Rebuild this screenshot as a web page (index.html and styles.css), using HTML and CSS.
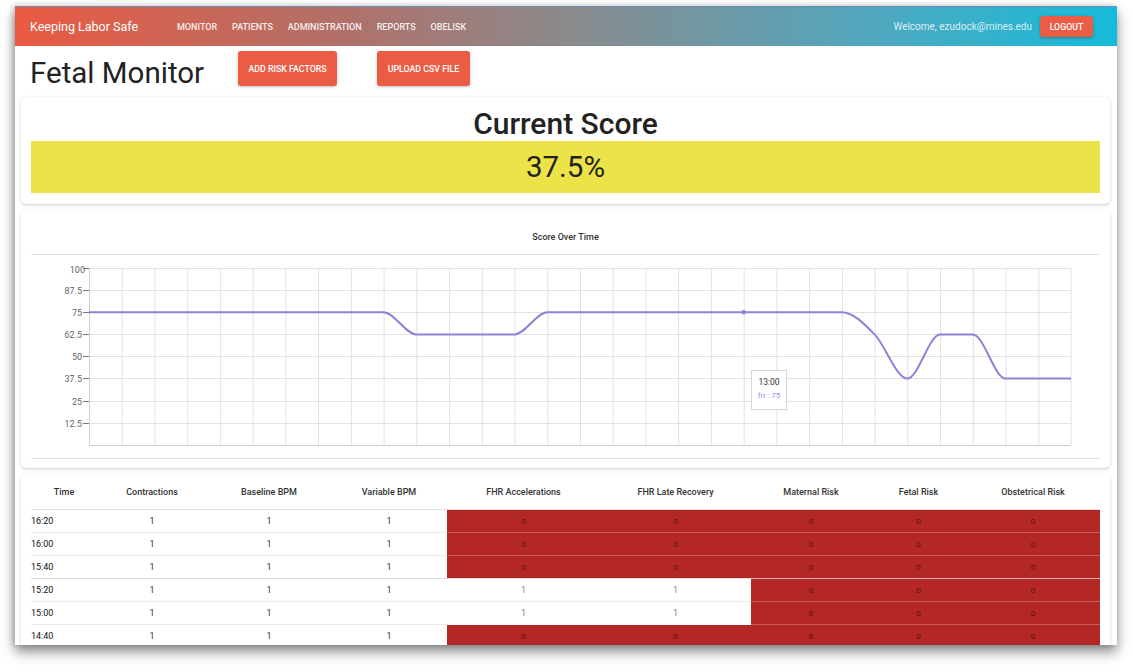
FILE: index.html
```html
<!DOCTYPE html>
<html>
<head>
<meta charset="utf-8">
<title>Fetal Monitor</title>
<link rel="stylesheet" href="styles.css">
</head>
<body>
<div class="window">
  <header class="topbar">
    <div class="brand">Keeping Labor Safe</div>
    <nav class="nav">
      <span>MONITOR</span><span>PATIENTS</span><span>ADMINISTRATION</span><span>REPORTS</span><span>OBELISK</span>
    </nav>
    <div class="user">
      <span class="welcome">Welcome, ezudock@mines.edu</span>
      <button class="btn btn-small">LOGOUT</button>
    </div>
  </header>

  <div class="title-row">
    <h1 class="page-title">Fetal Monitor</h1>
    <button class="btn btn-big btn-risk">ADD RISK FACTORS</button>
    <button class="btn btn-big btn-csv">UPLOAD CSV FILE</button>
  </div>

  <section class="card score-card">
    <h2 class="score-title">Current Score</h2>
    <div class="score-bar">37.5%</div>
  </section>

  <section class="card chart-card">
    <div class="chart-title">Score Over Time</div>
    <svg class="chart" width="1069" height="203" viewBox="31 255 1069 203" xmlns="http://www.w3.org/2000/svg">
      <g class="grid" stroke="#e2e2e2" stroke-width="1">
        <line x1="89" y1="268.5" x2="1071" y2="268.5"/>
        <line x1="89" y1="290.5" x2="1071" y2="290.5"/>
        <line x1="89" y1="312.5" x2="1071" y2="312.5"/>
        <line x1="89" y1="334.5" x2="1071" y2="334.5"/>
        <line x1="89" y1="356.5" x2="1071" y2="356.5"/>
        <line x1="89" y1="378.5" x2="1071" y2="378.5"/>
        <line x1="89" y1="401.5" x2="1071" y2="401.5"/>
        <line x1="89" y1="423.5" x2="1071" y2="423.5"/>
        <line x1="122.2" y1="268" x2="122.2" y2="445"/>
        <line x1="155" y1="268" x2="155" y2="445"/>
        <line x1="187.7" y1="268" x2="187.7" y2="445"/>
        <line x1="220.4" y1="268" x2="220.4" y2="445"/>
        <line x1="253.2" y1="268" x2="253.2" y2="445"/>
        <line x1="285.9" y1="268" x2="285.9" y2="445"/>
        <line x1="318.6" y1="268" x2="318.6" y2="445"/>
        <line x1="351.4" y1="268" x2="351.4" y2="445"/>
        <line x1="384.1" y1="268" x2="384.1" y2="445"/>
        <line x1="416.8" y1="268" x2="416.8" y2="445"/>
        <line x1="449.6" y1="268" x2="449.6" y2="445"/>
        <line x1="482.3" y1="268" x2="482.3" y2="445"/>
        <line x1="515" y1="268" x2="515" y2="445"/>
        <line x1="547.8" y1="268" x2="547.8" y2="445"/>
        <line x1="580.5" y1="268" x2="580.5" y2="445"/>
        <line x1="613.2" y1="268" x2="613.2" y2="445"/>
        <line x1="646" y1="268" x2="646" y2="445"/>
        <line x1="678.7" y1="268" x2="678.7" y2="445"/>
        <line x1="711.4" y1="268" x2="711.4" y2="445"/>
        <line x1="744.2" y1="268" x2="744.2" y2="445"/>
        <line x1="776.9" y1="268" x2="776.9" y2="445"/>
        <line x1="809.6" y1="268" x2="809.6" y2="445"/>
        <line x1="842.4" y1="268" x2="842.4" y2="445"/>
        <line x1="875.1" y1="268" x2="875.1" y2="445"/>
        <line x1="907.8" y1="268" x2="907.8" y2="445"/>
        <line x1="940.6" y1="268" x2="940.6" y2="445"/>
        <line x1="973.3" y1="268" x2="973.3" y2="445"/>
        <line x1="1006" y1="268" x2="1006" y2="445"/>
        <line x1="1038.8" y1="268" x2="1038.8" y2="445"/>
        <line x1="1071" y1="268" x2="1071" y2="445"/>
      </g>
      <g class="axis" stroke="#cfcfcf" stroke-width="1">
        <line x1="89.5" y1="268" x2="89.5" y2="445"/>
        <line x1="89" y1="445.5" x2="1071" y2="445.5"/>
      </g>
      <g class="ticks" stroke="#777" stroke-width="1">
        <line x1="83" y1="268.5" x2="89" y2="268.5"/>
        <line x1="83" y1="290.5" x2="89" y2="290.5"/>
        <line x1="83" y1="312.5" x2="89" y2="312.5"/>
        <line x1="83" y1="334.5" x2="89" y2="334.5"/>
        <line x1="83" y1="356.5" x2="89" y2="356.5"/>
        <line x1="83" y1="378.5" x2="89" y2="378.5"/>
        <line x1="83" y1="401.5" x2="89" y2="401.5"/>
        <line x1="83" y1="423.5" x2="89" y2="423.5"/>
      </g>
      <g class="ylabels" font-family="Roboto, 'Liberation Sans', sans-serif" font-size="9" fill="#666" text-anchor="end">
        <text x="85" y="273">100</text>
        <text x="82" y="293.5">87.5</text>
        <text x="82" y="315.5">75</text>
        <text x="82" y="337.5">62.5</text>
        <text x="82" y="359.5">50</text>
        <text x="82" y="381.5">37.5</text>
        <text x="82" y="404.5">25</text>
        <text x="82" y="426.5">12.5</text>
      </g>
      <path d="M89,312.25 L383.6,312.25 C394.5,312.25 405.4,334.4 416.3,334.4 L514.5,334.4 C525.4,334.4 536.4,312.25 547.3,312.25 L841.9,312.25 C852.8,312.25 863.7,323.3 874.6,334.4 C885.5,345.5 896.4,378.6 907.3,378.6 C918.2,378.6 929.2,334.4 940.1,334.4 L972.8,334.4 C983.7,334.4 994.6,378.6 1005.5,378.6 L1071,378.6" fill="none" stroke="#8c84d8" stroke-width="2"/>
      <circle cx="743.7" cy="312.25" r="2.2" fill="#8c84d8"/>
    </svg>
    <div class="tooltip">
      <div class="tt-label">13:00</div>
      <div class="tt-item">fri : 75</div>
    </div>
  </section>

  <section class="card table-card">
    <table class="data">
      <colgroup>
        <col style="width:66px"><col style="width:110px"><col style="width:124px"><col style="width:116px"><col style="width:153px"><col style="width:151px"><col style="width:120px"><col style="width:95px"><col style="width:134px">
      </colgroup>
      <thead>
        <tr>
          <th>Time</th><th>Contractions</th><th>Baseline BPM</th><th>Variable BPM</th><th>FHR Accelerations</th><th>FHR Late Recovery</th><th>Maternal Risk</th><th>Fetal Risk</th><th>Obstetrical Risk</th>
        </tr>
      </thead>
      <tbody>
        <tr><td class="time">16:20</td><td>1</td><td>1</td><td>1</td><td class="bad">0</td><td class="bad">0</td><td class="bad">0</td><td class="bad">0</td><td class="bad">0</td></tr>
        <tr><td class="time">16:00</td><td>1</td><td>1</td><td>1</td><td class="bad">0</td><td class="bad">0</td><td class="bad">0</td><td class="bad">0</td><td class="bad">0</td></tr>
        <tr><td class="time">15:40</td><td>1</td><td>1</td><td>1</td><td class="bad">0</td><td class="bad">0</td><td class="bad">0</td><td class="bad">0</td><td class="bad">0</td></tr>
        <tr class="split"><td class="time">15:20</td><td>1</td><td>1</td><td>1</td><td class="ok">1</td><td class="ok">1</td><td class="bad">0</td><td class="bad">0</td><td class="bad">0</td></tr>
        <tr><td class="time">15:00</td><td>1</td><td>1</td><td>1</td><td class="ok">1</td><td class="ok">1</td><td class="bad">0</td><td class="bad">0</td><td class="bad">0</td></tr>
        <tr><td class="time">14:40</td><td>1</td><td>1</td><td>1</td><td class="bad">0</td><td class="bad">0</td><td class="bad">0</td><td class="bad">0</td><td class="bad">0</td></tr>
      </tbody>
    </table>
  </section>
</div>
</body>
</html>
```
FILE: styles.css
```css
html, body {
  margin: 0;
  padding: 0;
  background: #ffffff;
}
body {
  font-family: Roboto, "Liberation Sans", Arial, sans-serif;
  color: #222;
  width: 1133px;
  height: 672px;
  overflow: hidden;
}
.window {
  margin: 6px 0 0 15px;
  width: 1102px;
  height: 639px;
  overflow: hidden;
  background: #fff;
  box-shadow: 0 7px 12px rgba(0, 0, 0, 0.45), -2px 0 6px rgba(0, 0, 0, 0.2);
  position: relative;
}
.topbar {
  height: 40px;
  display: flex;
  align-items: center;
  padding: 0 24px 0 15px;
  background: linear-gradient(to right, #ea5a42 0%, #b0716a 30%, #8b8a8c 50%, #4fa8bf 78%, #16bbda 100%);
  border-top: 1px solid #6f8fb5;
  box-sizing: border-box;
  color: #fff;
}
.brand {
  font-size: 12.5px;
  font-weight: 400;
  width: 124px;
  white-space: nowrap;
}
.nav {
  display: flex;
  gap: 15px;
  margin-left: 23px;
  font-size: 9px;
  font-weight: 500;
  letter-spacing: 0;
  color: rgba(255, 255, 255, 0.9);
}
.user {
  margin-left: auto;
  display: flex;
  align-items: center;
  gap: 8px;
}
.welcome {
  font-size: 10px;
  color: rgba(255, 255, 255, 0.82);
}
.btn {
  border: none;
  background: #eb5c45;
  color: #fff;
  font-family: Roboto, "Liberation Sans", Arial, sans-serif;
  font-weight: 500;
  font-size: 8.8px;
  letter-spacing: 0;
  border-radius: 3px;
  box-shadow: 0 1px 3px rgba(0, 0, 0, 0.25);
  padding: 0;
  cursor: pointer;
}
.btn-small {
  width: 53px;
  height: 21px;
}
.title-row {
  height: 51px;
  display: flex;
  align-items: flex-start;
  padding-left: 15px;
}
.page-title {
  margin: 9px 0 0 0;
  font-size: 29.5px;
  font-weight: 400;
  line-height: 36px;
  color: #222;
  width: 208px;
}
.btn-big {
  margin-top: 5px;
  height: 35px;
}
.btn-risk {
  width: 99px;
}
.btn-csv {
  width: 93px;
  margin-left: 40px;
}
.card {
  margin: 0 7px 0 6px;
  background: #fff;
  border-radius: 5px;
  box-shadow: 0 1px 3px rgba(0, 0, 0, 0.22);
  padding: 0 10px;
}
.score-card {
  padding-top: 10px;
  padding-bottom: 11px;
}
.score-title {
  margin: 0;
  text-align: center;
  font-size: 30px;
  font-weight: 500;
  line-height: 34px;
  color: #222;
}
.score-bar {
  height: 52px;
  line-height: 52px;
  background: #ebe347;
  text-align: center;
  font-size: 29.5px;
  font-weight: 400;
  color: #222;
}
.chart-card {
  margin-top: 6px;
  padding-top: 10px;
  padding-bottom: 9px;
  position: relative;
}
.chart-title {
  height: 34px;
  line-height: 34px;
  text-align: center;
  font-size: 9px;
  font-weight: 500;
  color: #333;
  border-bottom: 1px solid #e0e0e0;
}
.chart {
  display: block;
  border-bottom: 1px solid #e0e0e0;
}
.tooltip {
  position: absolute;
  left: 730px;
  top: 160px;
  width: 34px;
  height: 38px;
  background: #fff;
  border: 1px solid #d6d6d6;
  text-align: center;
  font-size: 8.5px;
}
.tt-label {
  margin-top: 6px;
  color: #333;
}
.tt-item {
  margin-top: 4px;
  color: #9a92e0;
  font-size: 8px;
}
.table-card {
  margin-top: 6px;
  padding-bottom: 20px;
}
.data {
  width: 1069px;
  table-layout: fixed;
  border-collapse: collapse;
  font-size: 9px;
}
.data th {
  height: 35px;
  font-weight: 500;
  color: #333;
  text-align: center;
  border-bottom: 1px solid #e0e0e0;
  padding: 0;
}
.data td {
  height: 22px;
  padding: 0;
  text-align: center;
  color: #333;
  border-top: 1px solid #ececec;
}
.data tbody tr:first-child td {
  border-top: none;
}
.data td.time {
  text-align: left;
  color: #111;
  font-weight: 400;
}
.data td.bad {
  background: #b32727;
  color: #5a1212;
  font-size: 8px;
  border-top: 1px solid rgba(255, 255, 255, 0.25);
}
.data td.ok {
  color: #888;
}
.data tr.split td {
  border-top: 1px solid #dcdcdc;
}
.data tr.split td.bad {
  border-top: 1px solid rgba(255, 255, 255, 0.6);
}
```
